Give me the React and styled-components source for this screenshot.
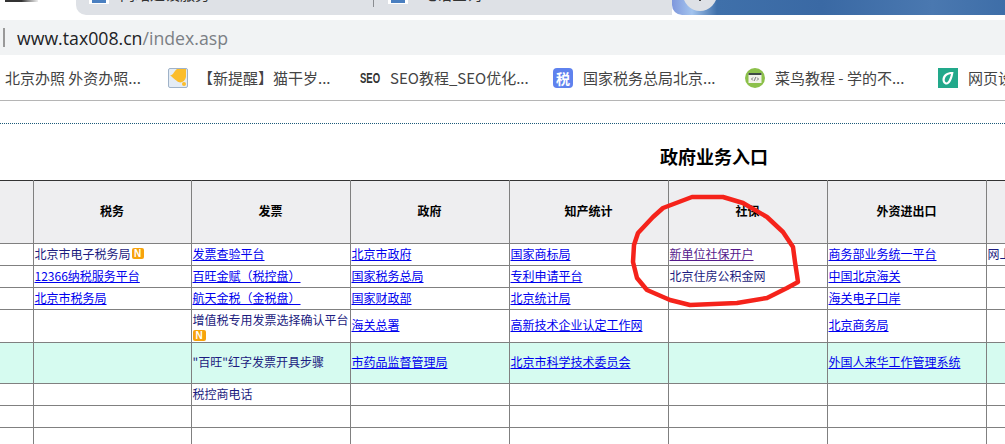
import styled, { createGlobalStyle } from "styled-components";

const GlobalStyle = createGlobalStyle`
  html, body {
    margin: 0;
    padding: 0;
    width: 1005px;
    height: 444px;
    overflow: hidden;
    background: #fff;
    font-family: "Noto Sans CJK SC", "Liberation Sans", sans-serif;
  }
`;

const Page = styled.div`
  position: relative;
  width: 1005px;
  height: 444px;
  overflow: hidden;
`;

// 浏览器标签栏
const TabStrip = styled.div`
  display: flex;
  height: 15px;
  margin-bottom: 5px;
`;

const WindowIcon = styled.div`
  width: 76px;
  padding-left: 5px;
  box-sizing: border-box;
  &::before {
    content: "";
    display: block;
    width: 33px;
    height: 2px;
    background: linear-gradient(to right, #333 0 50%, #888 70%, #eee);
  }
`;

const TabGroup = styled.div`
  display: flex;
  width: 596px;
  background: #dee1e6;
  border-bottom-left-radius: 10px;
  overflow: hidden;
`;

const Tab = styled.div`
  display: flex;
  gap: ${(p) => p.$gap}px;
  width: ${(p) => p.$width}px;
  padding-left: ${(p) => p.$left}px;
  box-sizing: border-box;
  height: 15px;
`;

const Favicon = styled.div`
  width: 20px;
  height: 4px;
  background: #fff;
  display: flex;
  justify-content: center;
  &::after {
    content: "";
    width: 14px;
    height: 3px;
    background: #4a7fc0;
  }
`;

const TabTitle = styled.span`
  font-size: 15px;
  line-height: 15px;
  margin-top: -14px;
  color: #333;
  white-space: nowrap;
`;

const TabDivider = styled.div`
  width: 1px;
  height: 7px;
  background: #8a8d91;
`;

const Desktop = styled.div`
  position: relative;
  flex: 1;
  border-bottom-left-radius: 10px;
  background: linear-gradient(to right, #7f97dc 0, #a3c4ee 20px, #3f70aa 45px, #3a69a4 150px, #4a78b0 260px, #3e6ea8 333px);
  overflow: hidden;
`;

const Bubble = styled.div`
  position: absolute;
  left: 11px;
  top: -23px;
  width: 34px;
  height: 34px;
  border-radius: 50%;
  background: #dee1e6;
  &::after {
    content: "";
    position: absolute;
    left: 16px;
    top: 22px;
    width: 2px;
    height: 2px;
    background: #444;
  }
`;

// 地址栏
const AddressBar = styled.div`
  display: flex;
  align-items: center;
  height: 35px;
  background: #f1f3f4;
`;

const BarMark = styled.div`
  width: 2px;
  height: 19px;
  margin: 0 12px 0 3px;
  background: #999;
`;

const Url = styled.div`
  font-family: "Open Sans", sans-serif;
  font-size: 17.7px;
  color: #202124;
  span {
    color: #7b7f85;
  }
`;

// 书签栏
const Bookmarks = styled.div`
  display: flex;
  align-items: center;
  height: 45px;
  padding-left: 5px;
  border-bottom: 1px solid #b5b5b5;
  white-space: nowrap;
  overflow: hidden;
`;

const Bookmark = styled.div`
  display: flex;
  align-items: center;
  gap: 10px;
  flex: none;
  width: ${(p) => p.$width}px;
  font-size: 15px;
  color: #444;
`;

const IconBox = styled.span`
  display: flex;
  align-items: center;
  justify-content: center;
  flex: none;
  width: 20px;
  height: 20px;
  overflow: hidden;
`;

const SeoMark = styled(IconBox)`
  overflow: visible;
  transform: scaleX(0.68);
  font-family: "Liberation Sans", sans-serif;
  font-size: 14px;
  font-weight: 700;
  color: #333;
`;

const TaxMark = styled(IconBox)`
  border-radius: 4px;
  background: #5f82ee;
  color: #fff;
  font-size: 14px;
  font-weight: 700;
`;

const Dotted = styled.div`
  margin-top: 22px;
  border-top: 1px dotted #1c5a78;
`;

const Title = styled.h2`
  width: 1428px;
  height: 56px;
  margin: 0;
  font-size: 18px;
  line-height: 64px;
  font-weight: 700;
  text-align: center;
  color: #000;
`;

const Grid = styled.table`
  width: 1179px;
  table-layout: fixed;
  border-collapse: collapse;
  font-size: 12px;
  line-height: 16px;
  color: #1c1c80;
`;

const Head = styled.th`
  height: 60px;
  padding: 0 0 2px;
  background: #eeeef0;
  border: 1px solid #808080;
  border-top-color: #333;
  color: #000;
  font-size: 12px;
  font-weight: 700;
  &:first-child {
    border-left: none;
  }
`;

const Row = styled.tr`
  height: ${(p) => p.$height}px;
  background: ${(p) => (p.$mint ? "#d6fbf0" : "#fff")};
`;

const Cell = styled.td`
  padding: ${(p) => (p.$stacked ? "2px 1px 0" : "0 1px 2px")};
  border: 1px solid #808080;
  line-height: ${(p) => (p.$stacked ? 15 : 16)}px;
  white-space: nowrap;
  overflow: hidden;
  &:first-child {
    border-left: none;
  }
`;

const Link = styled.a`
  color: ${(p) => (p.$visited ? "#551a8b" : "#0000ee")};
  text-decoration: underline;
`;

const NewBadge = styled.span`
  display: inline-block;
  width: ${(p) => (p.$block ? 13 : 12)}px;
  height: 11px;
  margin: ${(p) => (p.$block ? "3px 0 0" : "0 0 0 1px")};
  border-radius: 2px;
  background: #f7a30c;
  color: #fff;
  font-family: "Liberation Sans", sans-serif;
  font-size: 10px;
  font-weight: 700;
  line-height: 11px;
  text-align: center;
  vertical-align: ${(p) => (p.$block ? "top" : "2px")};
`;

const Scribble = styled.svg`
  position: absolute;
  left: 0;
  top: 0;
  pointer-events: none;
`;

const columns = [33, 158, 159, 159, 159, 159, 159, 193];
const heads = ["", "税务", "发票", "政府", "知产统计", "社保", "外资进出口", ""];

const l = (text, extra = {}) => ({ text, link: true, ...extra });

const rows = [
  {
    height: 22,
    cells: [
      [{ text: "北京市电子税务局", badge: true }],
      [l("发票查验平台")],
      [l("北京市政府")],
      [l("国家商标局")],
      [l("新单位社保开户", { visited: true })],
      [l("商务部业务统一平台")],
      [{ text: "网上办事大厅" }],
    ],
  },
  {
    height: 22,
    cells: [
      [l("12366纳税服务平台")],
      [l("百旺金赋（税控盘）")],
      [l("国家税务总局")],
      [l("专利申请平台")],
      [{ text: "北京住房公积金网" }],
      [l("中国北京海关")],
      [],
    ],
  },
  {
    height: 22,
    cells: [
      [l("北京市税务局")],
      [l("航天金税（金税盘）")],
      [l("国家财政部")],
      [l("北京统计局")],
      [],
      [l("海关电子口岸")],
      [],
    ],
  },
  {
    height: 33,
    cells: [
      [],
      [{ text: "增值税专用发票选择确认平台", blockBadge: true }],
      [l("海关总署")],
      [l("高新技术企业认定工作网")],
      [],
      [l("北京商务局")],
      [],
    ],
  },
  {
    height: 41,
    mint: true,
    cells: [
      [],
      [{ text: '"百旺"红字发票开具步骤' }],
      [l("市药品监督管理局")],
      [l("北京市科学技术委员会")],
      [],
      [l("外国人来华工作管理系统")],
      [],
    ],
  },
  { height: 22, cells: [[], [{ text: "税控商电话" }], [], [], [], [], []] },
  { height: 22, cells: [[], [], [], [], [], [], []] },
  { height: 22, cells: [[], [], [], [], [], [], []] },
];

const CellContent = ({ item }) => {
  if (!item) return null;
  return (
    <>
      {item.link ? <Link href="#" $visited={item.visited}>{item.text}</Link> : item.text}
      {item.badge && <NewBadge>N</NewBadge>}
      {item.blockBadge && (
        <>
          <br />
          <NewBadge $block>N</NewBadge>
        </>
      )}
    </>
  );
};

const App = () => (
  <Page>
    <GlobalStyle />
    <TabStrip>
      <WindowIcon />
      <TabGroup>
        <Tab $width={297} $left={13} $gap={11}>
          <Favicon />
          <TabTitle>网站建设服务</TabTitle>
        </Tab>
        <TabDivider />
        <Tab $width={298} $left={14} $gap={14}>
          <Favicon />
          <TabTitle>电话查询</TabTitle>
        </Tab>
      </TabGroup>
      <Desktop>
        <Bubble />
      </Desktop>
    </TabStrip>

    <AddressBar>
      <BarMark />
      <Url>
        www.tax008.cn<span>/index.asp</span>
      </Url>
    </AddressBar>

    <Bookmarks>
      <Bookmark $width={163}>北京办照 外资办照...</Bookmark>
      <Bookmark $width={192}>
        <IconBox>
          <svg width="20" height="20" viewBox="0 0 20 20">
            <rect x="0.5" y="0.5" width="19" height="19" rx="1.5" fill="#e4ecf5" stroke="#9fb2c8" />
            <path d="M2 7 C5 8 6 3 9 1 L18 1 L18 9 C17 14 12 16 9 13 C6 11 4 9 2 7 Z" fill="#fbbd2c" />
            <circle cx="16" cy="16" r="2" fill="#fbbd2c" />
          </svg>
        </IconBox>
        【新提醒】猫干岁...
      </Bookmark>
      <Bookmark $width={193}>
        <SeoMark>SEO</SeoMark>
        SEO教程_SEO优化...
      </Bookmark>
      <Bookmark $width={192}>
        <TaxMark>税</TaxMark>
        国家税务总局北京...
      </Bookmark>
      <Bookmark $width={193}>
        <IconBox>
          <svg width="20" height="20" viewBox="0 0 20 20">
            <circle cx="10" cy="10" r="10" fill="#8cc04a" />
            <rect x="3.5" y="5" width="13" height="10" fill="#f2f2ea" />
            <rect x="3.5" y="5" width="13" height="2" fill="#3f4a45" />
            <path d="M8 9.5 L6.5 11 L8 12.5 M12 9.5 L13.5 11 L12 12.5 M10.6 9.2 L9.4 12.8" fill="none" stroke="#555" strokeWidth="0.8" />
          </svg>
        </IconBox>
        菜鸟教程 - 学的不...
      </Bookmark>
      <Bookmark $width={120}>
        <IconBox>
          <svg width="20" height="20" viewBox="0 0 20 20">
            <rect width="20" height="20" fill="#22a98b" />
            <path d="M15.5 4 C10 3.5 5 6 4.5 11 C4.3 14 6 16.5 8.5 16.5 C12 16.5 14.5 11 15.5 4 Z M13 6 C12 10 10.5 14.2 8.5 14.4 C7 14.5 6.5 12.5 6.8 11 C7.3 8 10 6.2 13 6 Z" fill="#fff" fillRule="evenodd" />
          </svg>
        </IconBox>
        网页设计
      </Bookmark>
    </Bookmarks>

    <Dotted />
    <Title>政府业务入口</Title>

    <Grid>
      <colgroup>
        {columns.map((w, i) => (
          <col key={i} style={{ width: w }} />
        ))}
      </colgroup>
      <thead>
        <tr>
          {heads.map((h, i) => (
            <Head key={i}>{h}</Head>
          ))}
        </tr>
      </thead>
      <tbody>
        {rows.map((row, i) => (
          <Row key={i} $height={row.height} $mint={row.mint}>
            <Cell />
            {row.cells.map((c, j) => (
              <Cell key={j} $stacked={c[0] && c[0].blockBadge}>
                <CellContent item={c[0]} />
              </Cell>
            ))}
          </Row>
        ))}
      </tbody>
    </Grid>

    <Scribble width="1005" height="444" viewBox="0 0 1005 444">
      <path
        d="M692 197 L723 197 L743 203 L767 217 L783 232 L793 247 L795 262 L797 275 L798 282 L787 288 L767 298 L737 303 L690 305 L670 300 L647 290 L637 278 L633 262 L634 245 L638 233 L653 217 L663 208 Z"
        fill="none"
        stroke="#f5231b"
        strokeWidth="4.5"
        strokeLinejoin="round"
      />
    </Scribble>
  </Page>
);

export default App;
